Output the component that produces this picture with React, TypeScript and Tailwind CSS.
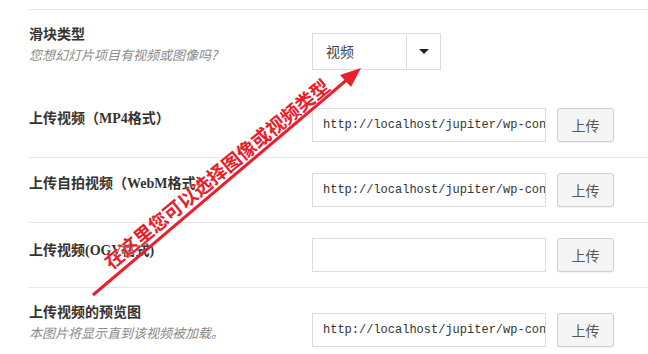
import React from 'react'

const labelCls =
  "text-[14px] leading-5 font-bold text-[#333] [font-family:'Liberation_Serif','Noto_Sans_CJK_SC',serif]"
const hintCls =
  "text-[13px] leading-[18px] italic text-[#8a8a8a] [font-family:'Noto_Sans_CJK_SC',sans-serif]"

function UploadField({ value }: { value?: string }) {
  return (
    <div className="flex items-center gap-[11px]">
      <div className="flex h-[34px] w-[234px] items-center overflow-hidden whitespace-nowrap border border-[#dcdcdc] bg-white pl-[10px] text-[12px] text-[#333] [font-family:'Liberation_Mono',monospace]">
        {value}
      </div>
      <button className="h-[34px] w-[57px] rounded-[3px] border border-[#cfcfcf] bg-[#f5f5f5] text-[14px] text-[#555] shadow-[0_1px_1px_rgba(0,0,0,0.06)] [font-family:'Noto_Sans_CJK_SC',sans-serif]">
        上传
      </button>
    </div>
  )
}

const url = 'http://localhost/jupiter/wp-con'

export default function App() {
  return (
    <div className="relative h-[354px] w-[648px] overflow-hidden bg-white">
      <div className="ml-[29px] mt-[9px] border-t border-[#e6e6e6]">
        {/* slider type */}
        <div className="flex pt-[15px]">
          <div className="w-[283px]">
            <div className={labelCls}>滑块类型</div>
            <div className={hintCls + ' mt-[1px]'}>您想幻灯片项目有视频或图像吗?</div>
          </div>
          <div className="mt-[8px] flex h-[37px] w-[129px] items-center border border-[#dcdcdc] bg-white">
            <div className="flex-1 pl-[13px] text-[14px] text-[#444] [font-family:'Noto_Sans_CJK_SC',sans-serif]">
              视频
            </div>
            <div className="h-[33px] w-px bg-[#dcdcdc]" />
            <div className="flex w-[33px] justify-center">
              <div className="h-0 w-0 border-x-[5px] border-t-[5px] border-x-transparent border-t-[#222]" />
            </div>
          </div>
        </div>

        {/* mp4 */}
        <div className="mt-[38px] flex items-start border-b border-[#e6e6e6] pb-[15px]">
          <div className={labelCls + ' w-[283px] pt-[1px]'}>上传视频（MP4格式）</div>
          <UploadField value={url} />
        </div>

        {/* webm */}
        <div className="flex items-start border-b border-[#e6e6e6] py-[15px]">
          <div className={labelCls + ' w-[283px] pt-[1px]'}>上传自拍视频（WebM格式）</div>
          <UploadField value={url} />
        </div>

        {/* ogv */}
        <div className="flex items-start border-b border-[#e6e6e6] py-[15px]">
          <div className={labelCls + ' w-[283px] pt-[3px]'}>上传视频(OGV格式)</div>
          <UploadField />
        </div>

        {/* preview image */}
        <div className="flex items-start pt-[15px]">
          <div className="w-[283px]">
            <div className={labelCls}>上传视频的预览图</div>
            <div className={hintCls + ' mt-[1px]'}>本图片将显示直到该视频被加载。</div>
          </div>
          <div className="pt-[10px]">
            <UploadField value={url} />
          </div>
        </div>
      </div>

      {/* annotation overlay */}
      <svg className="pointer-events-none absolute left-0 top-0" width="648" height="354">
        <line x1="93" y1="295" x2="349" y2="78" stroke="#e8202a" strokeWidth="3" />
        <polygon points="361,68 351,87 340,75" fill="#e8202a" />
      </svg>
      <div className="pointer-events-none absolute left-[216px] top-[173px] -translate-x-1/2 -translate-y-1/2 rotate-[-39.5deg] whitespace-nowrap text-[19px] font-bold leading-none text-[#e8202a] [font-family:'Noto_Sans_CJK_SC',sans-serif] [text-shadow:0_0_2px_#fff]">
        在这里您可以选择图像或视频类型
      </div>
    </div>
  )
}
